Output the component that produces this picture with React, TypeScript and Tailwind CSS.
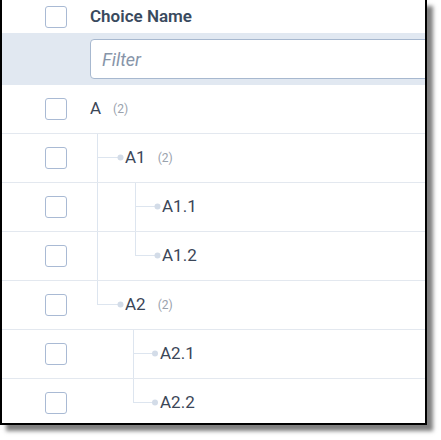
import React from 'react';

type Row = {
  label: string;
  count?: number;
  // tree connector drawing: width of the indent and the strokes inside it
  indent?: number;
  guides?: { x: number; full: boolean }[];
  dot?: number;
};

const LINE = '#dde5ef';

const rows: Row[] = [
  { label: 'A', count: 2 },
  { label: 'A1', count: 2, indent: 35, guides: [{ x: 7.5, full: true }], dot: 30.5 },
  { label: 'A1.1', indent: 72, guides: [{ x: 7.5, full: true }, { x: 45.5, full: true }], dot: 67.5 },
  { label: 'A1.2', indent: 72, guides: [{ x: 7.5, full: true }, { x: 45.5, full: false }], dot: 67.5 },
  { label: 'A2', count: 2, indent: 35, guides: [{ x: 7.5, full: false }], dot: 30.5 },
  { label: 'A2.1', indent: 70, guides: [{ x: 43.5, full: true }], dot: 65 },
  { label: 'A2.2', indent: 70, guides: [{ x: 43.5, full: false }], dot: 65 },
];

function Checkbox() {
  return <div className="w-[22px] h-[22px] shrink-0 rounded-[3px] border border-[#a9bad4] bg-white" />;
}

function Connector({ row }: { row: Row }) {
  if (!row.indent || !row.guides || row.dot === undefined) return null;
  const last = row.guides[row.guides.length - 1];
  return (
    <svg width={row.indent} height={48} className="shrink-0 self-stretch">
      {row.guides.map((g) => (
        <line key={g.x} x1={g.x} y1={0} x2={g.x} y2={g.full ? 48 : 24} stroke={LINE} strokeWidth={1} />
      ))}
      <line x1={last.x} y1={23.5} x2={row.dot} y2={23.5} stroke={LINE} strokeWidth={1} />
      <circle cx={row.dot} cy={23.5} r={3} fill="#d3dce8" />
    </svg>
  );
}

export default function App() {
  return (
    <div className="w-[441px] h-[440px] bg-white font-['Roboto','Liberation_Sans',sans-serif]">
      <div className="w-[427px] h-[425px] border-x-2 border-b-2 border-black bg-white overflow-hidden shadow-[6px_6px_4px_rgba(0,0,0,0.5)]">
        <div className="h-[33px] flex items-center">
          <div className="w-[88px] pl-[43px]">
            <Checkbox />
          </div>
          <span className="text-[17px] font-semibold text-[#394a5e]">Choice Name</span>
        </div>

        <div className="h-[52px] bg-[#e1e8f1] pl-[88px] pt-[6px]">
          <div className="h-[40px] w-[360px] rounded-[4px] border border-[#a7b8cf] bg-white flex items-center pl-[11px]">
            <span className="text-[18px] italic text-[#8795a9]">Filter</span>
          </div>
        </div>

        {rows.map((row) => (
          <div key={row.label} className="h-[49px] border-b border-[#e3e8ef] flex items-center">
            <div className="w-[88px] shrink-0 pl-[43px]">
              <Checkbox />
            </div>
            <Connector row={row} />
            <span className="text-[17px] text-[#3b4657]">{row.label}</span>
            {row.count !== undefined && (
              <span className="ml-[12px] text-[12px] text-[#9aa2ad]">({row.count})</span>
            )}
          </div>
        ))}
      </div>
    </div>
  );
}
